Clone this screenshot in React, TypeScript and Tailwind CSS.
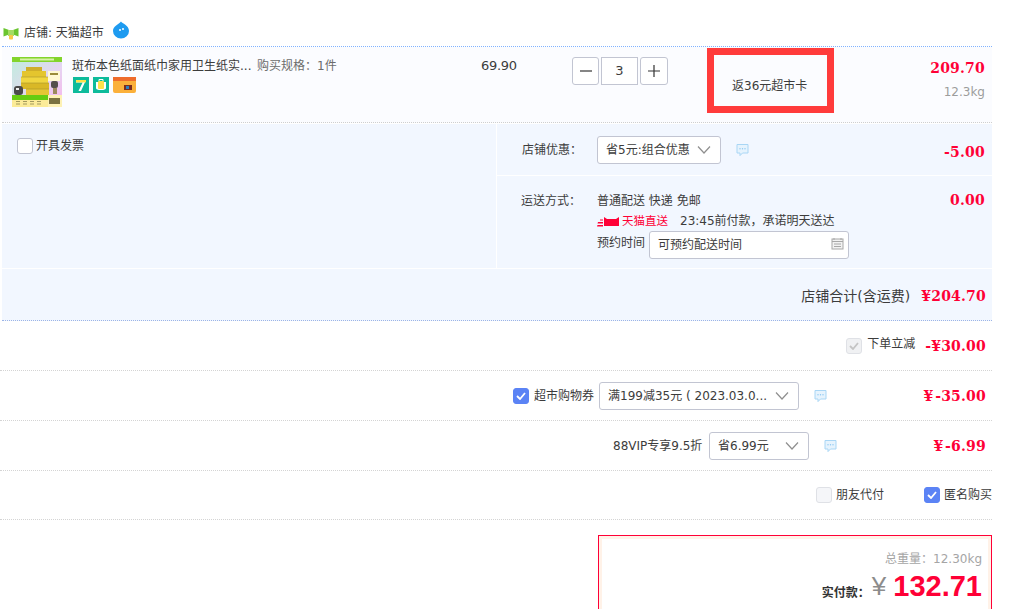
const sans = "font-['DejaVu_Sans','Noto_Sans_CJK_SC',sans-serif]"
const price = "font-['DejaVu_Serif',serif] text-sm font-bold tracking-[0.2px] text-[#ff0036]"

function Chevron() {
  return (
    <svg width="16" height="10" viewBox="0 0 16 10" className="shrink-0">
      <path d="M2 1.5 L8 8 L14 1.5" fill="none" stroke="#8f8f8f" strokeWidth="1.2" />
    </svg>
  )
}

function Bubble() {
  return (
    <svg width="13" height="14" viewBox="0 0 13 14" className="shrink-0">
      <path d="M1 1.5 H12 V10 H6.5 L4 12.6 V10 H1 Z" fill="#e6f3fd" stroke="#a9d6f5" strokeWidth="1" />
      <circle cx="4" cy="5.8" r="0.7" fill="#8cc8f2" />
      <circle cx="6.5" cy="5.8" r="0.7" fill="#8cc8f2" />
      <circle cx="9" cy="5.8" r="0.7" fill="#8cc8f2" />
    </svg>
  )
}

function Check({ muted = false }: { muted?: boolean }) {
  return (
    <span className={`flex h-4 w-4 shrink-0 items-center justify-center rounded-[3px] border ${muted ? "border-[#dfe1e6] bg-[#f0f1f3]" : "border-[#5b83f5] bg-[#5b83f5]"}`}>
      <svg width="10" height="8" viewBox="0 0 10 8">
        <path d="M1 4 L4 7 L9 1" fill="none" stroke={muted ? "#c4c4c4" : "#fff"} strokeWidth="1.8" />
      </svg>
    </span>
  )
}

function Select({ text, className }: { text: string; className: string }) {
  return (
    <div className={`flex h-7 items-center justify-between rounded-[3px] border border-[#c2c5d2] bg-white pl-2 pr-2 ${className}`}>
      <span className="whitespace-nowrap">{text}</span>
      <Chevron />
    </div>
  )
}

function Thumb() {
  return (
    <svg width="50" height="50" viewBox="0 0 50 50" className="shrink-0">
      <defs>
        <linearGradient id="thumbBg" x1="0" y1="0" x2="1" y2="1">
          <stop offset="0" stopColor="#bfeedd" />
          <stop offset="0.6" stopColor="#e6d4f2" />
          <stop offset="1" stopColor="#f8b4ea" />
        </linearGradient>
      </defs>
      <rect width="50" height="50" fill="url(#thumbBg)" />
      <rect width="50" height="5" fill="#83d42c" />
      <rect x="8" y="1.5" width="34" height="2" fill="#d8f2a8" />
      <rect y="38" width="36" height="5" fill="#66cc11" />
      <rect y="43" width="50" height="7" fill="#fbeb98" />
      <rect x="36" y="38" width="14" height="12" fill="#fdf1b5" />
      <rect x="37" y="41" width="11" height="6" fill="#7a7140" />
      <rect x="36" y="14" width="12" height="10" fill="#fff8d2" />
      <rect x="38" y="16" width="8" height="2" fill="#9a8a3a" />
      <rect x="14" y="10" width="16" height="4" fill="#cfae2a" />
      <rect x="10" y="14" width="24" height="6" fill="#e4c52e" />
      <rect x="9" y="20" width="27" height="6" fill="#f0d640" />
      <rect x="9" y="26" width="28" height="6" fill="#d9b826" />
      <rect x="14" y="32" width="23" height="6" fill="#e6c634" />
      <path d="M9 20 H36 M9 26 H37 M14 32 H37" stroke="#a8952c" strokeWidth="0.6" />
      <rect x="2" y="29" width="9" height="9" rx="3" fill="#4a4a4a" />
      <rect x="4" y="31" width="3" height="2" fill="#eee" />
      <rect x="39" y="24" width="7" height="7" rx="2" fill="#55504a" />
      <rect x="41" y="31" width="4" height="6" fill="#9c8a5c" />
      <path d="M4 44.5 H32 M4 47 H32" stroke="#a39a5e" strokeWidth="1" strokeDasharray="4 3" />
    </svg>
  )
}

function Badges() {
  return (
    <div className="ml-px mt-[3px] flex items-center gap-1">
      <svg width="16" height="16" viewBox="0 0 16 16">
        <rect width="16" height="16" fill="#0dbb9b" />
        <path d="M3 3 H13 L8 14 H5.5 L9.6 5.4 H3 Z" fill="#fff" />
        <rect x="3" y="3" width="10" height="2.4" fill="#ffe24a" />
      </svg>
      <svg width="16" height="16" viewBox="0 0 16 16">
        <rect width="16" height="16" fill="#0dbb9b" />
        <path d="M3 5 H13 V11 Q13 13 8 13 Q3 13 3 11 Z" fill="#fff" />
        <rect x="5" y="4" width="6" height="8" rx="1" fill="#ffe24a" />
        <path d="M6 4 V2.5 H10 V4" fill="none" stroke="#fff" />
      </svg>
      <svg width="23" height="16" viewBox="0 0 23 16">
        <rect width="23" height="16" rx="2" fill="#fbb03b" />
        <rect width="23" height="4" fill="#ee6c2c" />
        <rect x="11" y="8" width="8" height="5" fill="#7c2c1e" />
        <rect x="13" y="9" width="3" height="3" fill="#2c7fc0" />
      </svg>
    </div>
  )
}

export default function App() {
  return (
    <div className={`relative h-[609px] w-[1022px] overflow-hidden bg-white text-xs text-[#3c3c3c] ${sans}`}>
      <div className="w-[992px]">
        {/* shop title */}
        <div className="ml-[2px] flex h-[47px] items-center border-b border-dotted border-[#80b2ff] pt-[20px]">
          <svg width="16" height="14" viewBox="0 0 16 14" className="ml-px">
            <path d="M0.5 2 L6 4 H10 L15.5 2 V10.5 L10 8.5 H6 L0.5 10.5 Z" fill="#6ac52f" />
            <rect x="5" y="4" width="6" height="6" fill="#a5dc62" />
            <rect x="6" y="9" width="4" height="4.5" rx="1" fill="#f7c948" />
          </svg>
          <span className="ml-[5px]">店铺: 天猫超市</span>
          <svg width="18" height="18" viewBox="0 0 18 18" className="ml-[8px] -mt-[6px]">
            <path d="M9 0.5 C10 2.5 17 4 17 10 A8 7.6 0 0 1 1 10 C1 5 6 4 9 0.5 Z" fill="#1e9bf0" />
            <circle cx="8" cy="9" r="1" fill="#fff" />
            <circle cx="11" cy="8" r="1" fill="#fff" />
          </svg>
        </div>

        {/* item */}
        <div className="ml-[2px] flex h-[76px] border-b border-dotted border-[#cfcfcf] bg-[#fbfcff] pt-[10px]">
          <div className="ml-[10px]">
            <Thumb />
          </div>
          <div className="ml-[10px] w-[185px] pt-[1px]">
            <div className="whitespace-nowrap">斑布本色纸面纸巾家用卫生纸实...</div>
            <Badges />
          </div>
          <div className="w-[224px] whitespace-nowrap pt-[1px] text-[#6c6c6c]">购买规格：1件</div>
          <div className="w-[91px] text-[13px] tracking-[-0.3px]">69.90</div>
          <div className="flex h-7 w-[135px] gap-[2px] text-[13px]">
            <button className="flex h-7 w-[27px] items-center justify-center rounded-[3px] border border-[#c2c5d2] bg-white text-[#333]">
              <svg width="14" height="14" viewBox="0 0 14 14"><path d="M1 7 H13" stroke="#333" strokeWidth="1.2" /></svg>
            </button>
            <div className="flex h-7 w-[37px] items-center justify-center border border-[#c2c5d2] bg-white">3</div>
            <button className="flex h-7 w-[28px] items-center justify-center rounded-[3px] border border-[#c2c5d2] bg-white text-[#333]">
              <svg width="14" height="14" viewBox="0 0 14 14"><path d="M1 7 H13 M7 1 V13" stroke="#333" strokeWidth="1.2" /></svg>
            </button>
          </div>
          <div className="w-[160px] whitespace-nowrap pl-[25px] pt-[21px]">返36元超市卡</div>
          <div className="ml-auto pr-[7px] text-right">
            <div className={`${price} leading-[22px]`}>209.70</div>
            <div className="mt-[5px] text-[#9c9c9c]">12.3kg</div>
          </div>
        </div>

        {/* shop options */}
        <div className="ml-[2px] mt-[1px] flex h-[145px] border-b border-white bg-[#f2f7ff]">
          <div className="w-[494px] pl-[15px] pt-[14px]">
            <label className="flex items-center gap-[3px]">
              <span className="block h-4 w-4 rounded-[3px] border border-[#c2c5d2] bg-white" />
              <span>开具发票</span>
            </label>
          </div>
          <div className="w-px bg-white" />
          <div className="flex-1">
            <div className="flex h-[52px] items-center border-b border-white">
              <span className="ml-[25px] w-[75px]">店铺优惠：</span>
              <Select text="省5元:组合优惠" className="w-[124px]" />
              <span className="ml-[15px]"><Bubble /></span>
              <span className={`ml-auto pr-[7px] pt-[4px] ${price}`}>-5.00</span>
            </div>
            <div className="flex pt-[17px]">
              <span className="ml-[24px] w-[76px]">运送方式：</span>
              <div className="flex-1">
                <div>普通配送 快递 免邮</div>
                <div className="mt-[4px] flex items-center">
                  <svg width="24" height="11" viewBox="0 0 24 11">
                    <path d="M7 1 L10 3 H19 L22 1 V10 H7 Z" fill="#ff0036" />
                    <path d="M1 6 H6 V7.5 H0.5 Z M0.5 9 H6 V10.5 H0 Z M3 3.5 H6 V4.5 H3 Z" fill="#ff0036" />
                  </svg>
                  <span className="ml-px mt-px w-[58px] whitespace-nowrap text-[11.5px] text-[#ff0036]">天猫直送</span>
                  <span className="whitespace-nowrap">23:45前付款，承诺明天送达</span>
                </div>
                <div className="mt-[2px] flex">
                  <span className="pt-[4px]">预约时间</span>
                  <div className="ml-[4px] flex h-7 w-[200px] items-center justify-between rounded-[3px] border border-[#c2c5d2] bg-white pl-2 pr-[4px]">
                    <span>可预约配送时间</span>
                    <svg width="13" height="13" viewBox="0 0 13 13" className="-mt-[4px]">
                      <rect x="1" y="2" width="11" height="10" fill="#f2f2f2" stroke="#a8a8a8" />
                      <path d="M1 4.5 H12" stroke="#a8a8a8" />
                      <path d="M3 1 V3 M10 1 V3 M3 7 H10 M3 9.5 H10" stroke="#a8a8a8" />
                    </svg>
                  </div>
                </div>
              </div>
              <span className={`pr-[7px] leading-none ${price}`}>0.00</span>
            </div>
          </div>
        </div>

        {/* shop total */}
        <div className="ml-[2px] flex h-[52px] items-center justify-end border-b border-dotted border-[#9cb4e6] bg-[#f2f7ff] pr-[6px] pt-[3px]">
          <span className="text-sm">店铺合计(含运费)</span>
          <span className={`ml-[11px] ${price}`}>¥204.70</span>
        </div>

        {/* discounts */}
        <div className="flex h-[50px] items-center justify-end border-b border-dotted border-[#d4d4d4] pr-[6px]">
          <Check muted />
          <span className="ml-[5px] -mt-[3px]">下单立减</span>
          <span className={`ml-[10px] pt-[1px] ${price}`}>-¥30.00</span>
        </div>
        <div className="flex h-[50px] items-center border-b border-dotted border-[#d4d4d4] pr-[6px]">
          <span className="ml-[513px]"><Check /></span>
          <span className="ml-[5px] whitespace-nowrap">超市购物券</span>
          <Select text="满199减35元 ( 2023.03.0..." className="ml-[5px] w-[200px]" />
          <span className="ml-[15px]"><Bubble /></span>
          <span className={`ml-auto pt-[1px] ${price}`}>¥{"\u200a"}-35.00</span>
        </div>
        <div className="flex h-[50px] items-center border-b border-dotted border-[#d4d4d4] pr-[6px]">
          <span className="ml-[613px] w-[91px] whitespace-nowrap">88VIP专享9.5折</span>
          <Select text="省6.99元" className="ml-[5px] w-[100px]" />
          <span className="ml-[15px]"><Bubble /></span>
          <span className={`ml-auto pt-[1px] ${price}`}>¥{"\u200a"}-6.99</span>
        </div>
        <div className="flex h-[49px] items-center justify-end border-b border-dotted border-[#d4d4d4]">
          <span className="block h-4 w-4 rounded-[3px] border border-[#dfe1e6] bg-[#f5f6f9]" />
          <span className="ml-[4px]">朋友代付</span>
          <span className="ml-[40px]"><Check /></span>
          <span className="ml-[4px]">匿名购买</span>
        </div>

        {/* pay box */}
        <div className="ml-[598px] mt-[15px] h-[100px] border border-[#ff0036] bg-white">
          <div className="h-full border-[3px] border-[#fff2e8] pr-[6px] text-right">
            <div className="pt-[12px] text-[#a5a5a5]">总重量：12.30kg</div>
            <div className="mt-[3px] flex items-end justify-end">
              <span className="mb-[1px] font-bold text-[#333]">实付款：</span>
              <span className="ml-[2px] font-['Liberation_Sans',sans-serif] text-[26px] leading-8 text-[#8c8c8c]">¥</span>
              <span className="ml-[7px] font-['Liberation_Sans',sans-serif] text-[29px] font-bold leading-8 text-[#ff0036]">132.71</span>
            </div>
          </div>
        </div>
      </div>

      {/* red annotation box drawn over the screenshot */}
      <div className="absolute left-[707px] top-[48px] h-[65px] w-[127px] border-[7px] border-[#ff3b3b]" />
    </div>
  )
}
